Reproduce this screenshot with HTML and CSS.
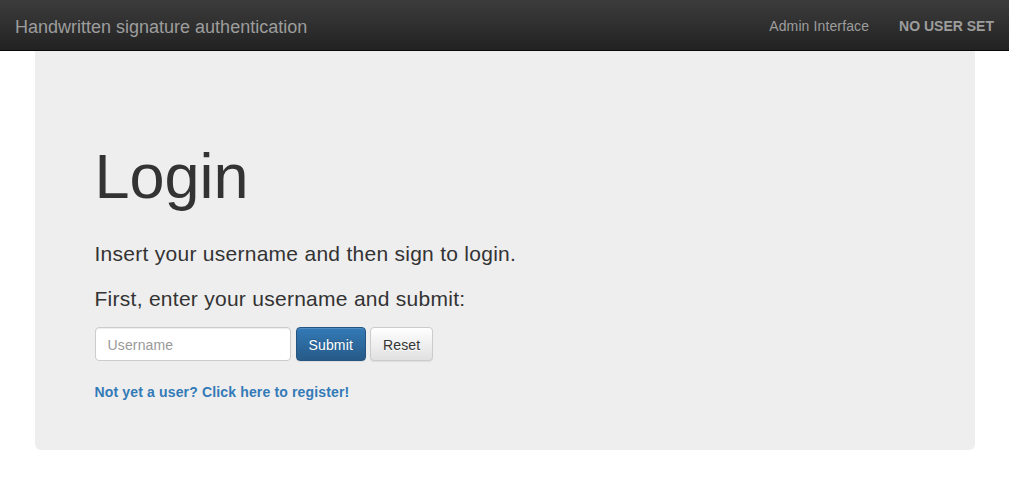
FILE: index.html
```html
<!DOCTYPE html>
<html>
<head>
<meta charset="utf-8">
<link rel="stylesheet" href="styles.css">
</head>
<body>
<nav class="navbar">
  <a class="brand" href="#">Handwritten signature authentication</a>
  <div class="nav-right">
    <a class="nav-link" href="#">Admin Interface</a>
    <span class="nav-user">NO USER SET</span>
  </div>
</nav>
<div class="container">
  <div class="jumbotron">
    <h1 class="title">Login</h1>
    <p class="lead-text first">Insert your username and then sign to login.</p>
    <p class="lead-text last">First, enter your username and submit:</p>
    <form class="form-inline">
      <input class="form-control" type="text" placeholder="Username">
      <button class="btn btn-primary" type="button">Submit</button>
      <button class="btn btn-default" type="button">Reset</button>
    </form>
    <a class="register" href="#">Not yet a user? Click here to register!</a>
  </div>
</div>
</body>
</html>
```
FILE: styles.css
```css
* { box-sizing: border-box; }
html, body { margin: 0; padding: 0; }
body {
  font-family: "Liberation Sans", Arial, sans-serif;
  font-size: 14px;
  line-height: 1.42857;
  color: #333;
  background: #fff;
}
.navbar {
  height: 51px;
  display: flex;
  align-items: center;
  justify-content: space-between;
  padding: 3px 15px 0 15px;
  background-image: linear-gradient(to bottom, #3c3c3c 0, #222 100%);
  border-bottom: 1px solid #080808;
}
.brand {
  font-size: 18px;
  line-height: 20px;
  color: #9d9d9d;
  text-decoration: none;
}
.nav-right {
  display: flex;
  align-items: center;
  gap: 30px;
}
.nav-link {
  color: #9d9d9d;
  text-decoration: none;
  font-size: 14px;
  letter-spacing: 0.12px;
}
.nav-user {
  color: #9d9d9d;
  font-weight: bold;
  font-size: 14px;
}
.container {
  width: 970px;
  margin: 0 auto;
  padding: 0 15px;
}
.jumbotron {
  background: #eee;
  border-radius: 0 0 6px 6px;
  padding: 48px 60px 48px 60px;
}
.title {
  font-size: 63px;
  line-height: 1.1;
  font-weight: 500;
  margin: 43px 0 28px 0;
  color: #333;
}
.lead-text {
  font-size: 21px;
  line-height: 30px;
  font-weight: 200;
  letter-spacing: 0.27px;
  margin: 0 0 15px 0;
}
.lead-text.last { margin-bottom: 13px; }
.form-inline {
  display: flex;
  align-items: center;
  gap: 4px;
  margin: 0 0 22px 0;
}
.form-control {
  width: 196px;
  height: 34px;
  padding: 7px 12px 5px 12px;
  font-family: inherit;
  font-size: 14px;
  line-height: 20px;
  letter-spacing: 0.15px;
  color: #555;
  background: #fff;
  border: 1px solid #ccc;
  border-radius: 4px;
  box-shadow: inset 0 1px 1px rgba(0,0,0,.075);
  margin-right: 1px;
}
.form-control::placeholder { color: #999; }
.btn {
  height: 34px;
  padding: 7px 12px 5px 12px;
  font-family: inherit;
  font-size: 14px;
  line-height: 20px;
  letter-spacing: 0.15px;
  border-radius: 4px;
  border: 1px solid transparent;
}
.btn-primary {
  color: #fff;
  background-image: linear-gradient(to bottom, #337ab7 0, #265a88 100%);
  border-color: #245580;
  text-shadow: 0 -1px 0 rgba(0,0,0,.2);
  box-shadow: inset 0 1px 0 rgba(255,255,255,.15), 0 1px 1px rgba(0,0,0,.075);
}
.btn-default {
  color: #333;
  background-image: linear-gradient(to bottom, #fff 0, #e0e0e0 100%);
  border-color: #ccc;
  text-shadow: 0 1px 0 #fff;
  box-shadow: inset 0 1px 0 rgba(255,255,255,.15), 0 1px 1px rgba(0,0,0,.075);
}
.register {
  display: block;
  font-size: 14px;
  font-weight: bold;
  line-height: 19px;
  letter-spacing: 0.15px;
  color: #337ab7;
  text-decoration: none;
}
```
